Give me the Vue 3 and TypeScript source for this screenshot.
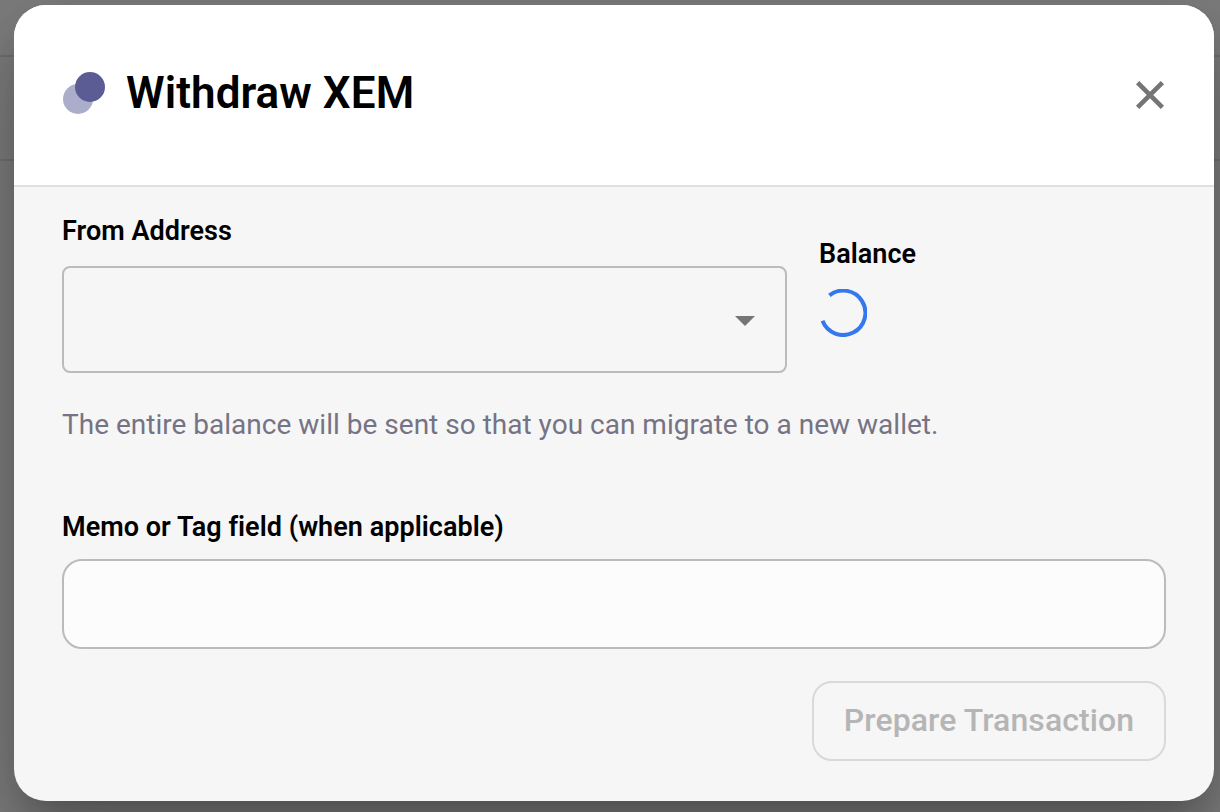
<script setup lang="ts">
import { ref } from 'vue'

const currency = ref<string>('XEM')
const memo = ref<string>('')
</script>

<template>
  <div class="page">
    <div class="page-row first"></div>
    <div class="page-row second"></div>
    <div class="overlay">
      <section class="dialog" role="dialog" aria-labelledby="dialog-title">
        <header class="header">
          <svg class="logo" width="42" height="42" viewBox="0 0 42 42" aria-hidden="true">
            <circle cx="15" cy="27" r="15" fill="#acadca" />
            <circle cx="27" cy="15" r="15" fill="#5a5c93" />
          </svg>
          <h1 id="dialog-title" class="title">Withdraw {{ currency }}</h1>
          <button class="close" type="button" aria-label="Close">
            <svg width="30" height="30" viewBox="0 0 30 30">
              <path d="M2.6 2.6 27.4 27.4M27.4 2.6 2.6 27.4" fill="none" stroke="#757575" stroke-width="4.6" />
            </svg>
          </button>
        </header>
        <div class="body">
          <div class="source">
            <div class="address">
              <div class="label from-label">From Address</div>
              <div class="select" role="combobox" aria-label="From Address">
                <svg width="20" height="10" viewBox="0 0 20 10"><path d="M0 0h20L10 10z" fill="#757575" /></svg>
              </div>
            </div>
            <div class="balance">
              <div class="label balance-label">Balance</div>
              <svg class="spinner" width="48" height="48" viewBox="0 0 48 48">
                <path d="M10.4 6.4A22.2 22.2 0 1 1 3.5 31.8" fill="none" stroke="#3478f0" stroke-width="4" />
              </svg>
            </div>
          </div>
          <p class="helper">The entire balance will be sent so that you can migrate to a new wallet.</p>
          <label class="label memo-label" for="memo">Memo or Tag field (when applicable)</label>
          <input id="memo" v-model="memo" class="memo" type="text" />
          <div class="actions">
            <button class="prepare" type="button" disabled>Prepare Transaction</button>
          </div>
        </div>
      </section>
    </div>
  </div>
</template>

<style>
body {
  margin: 0;
  overflow: hidden;
}
</style>

<style scoped>
* {
  box-sizing: border-box;
}

.page {
  position: relative;
  width: 1220px;
  height: 812px;
  overflow: hidden;
  background: #fafafa;
  font-family: Roboto, sans-serif;
}

.page-row {
  border-bottom: 2px solid #e0e0e0;
}

.page-row.first {
  height: 57px;
}

.page-row.second {
  height: 104px;
}

.overlay {
  position: absolute;
  inset: 0;
  padding: 5px 6px 11px 14px;
  background: rgba(0, 0, 0, 0.5);
}

.dialog {
  height: 796px;
  border-radius: 32px;
  background: #f6f6f6;
  box-shadow:
    0 22px 30px -14px rgba(0, 0, 0, 0.2),
    0 48px 76px 6px rgba(0, 0, 0, 0.14),
    0 18px 92px 16px rgba(0, 0, 0, 0.12);
}

.header {
  display: flex;
  align-items: center;
  height: 182px;
  padding: 0 49px;
  border-bottom: 2px solid #e0e0e0;
  border-radius: 32px 32px 0 0;
  background: #fff;
}

.logo {
  flex: none;
  margin-top: -4px;
}

.title {
  flex: 1;
  margin: -4px 0 0 21px;
  font-size: 44px;
  line-height: 60px;
  font-weight: 600;
  letter-spacing: 0.06px;
  color: #000;
  white-space: nowrap;
}

.close {
  display: flex;
  padding: 0;
  border: 0;
  background: none;
}

.body {
  padding: 0 48px;
}

.source {
  display: flex;
  gap: 32px;
}

.address {
  width: 725px;
}

.label {
  display: block;
  font-size: 27px;
  line-height: 32px;
  font-weight: 600;
  letter-spacing: 0.04px;
  color: #000;
  white-space: nowrap;
}

.from-label {
  margin-top: 28px;
}

.balance-label {
  margin-top: 51px;
}

.select {
  display: flex;
  align-items: center;
  justify-content: flex-end;
  height: 107px;
  margin-top: 19px;
  padding: 2px 30px 0 0;
  border: 2px solid #bbb;
  border-radius: 8px;
}

.spinner {
  display: block;
  margin-top: 19px;
}

.helper {
  margin: 35px 0 0;
  font-size: 28px;
  line-height: 34px;
  letter-spacing: 0.01px;
  color: #757384;
  white-space: nowrap;
}

.memo-label {
  margin-top: 69px;
}

.memo {
  display: block;
  width: 100%;
  height: 90px;
  margin-top: 16px;
  padding: 0 24px;
  border: 2px solid #bbb;
  border-radius: 20px;
  background: #fcfcfc;
  font: 28px Roboto, sans-serif;
}

.actions {
  display: flex;
  justify-content: flex-end;
  margin-top: 32px;
}

.prepare {
  width: 354px;
  height: 80px;
  padding: 0 0 2px;
  border: 2px solid #d9d9d9;
  border-radius: 20px;
  background: transparent;
  font: 500 32px Roboto, sans-serif;
  letter-spacing: 0.1px;
  color: #b5b5b5;
  white-space: nowrap;
}
</style>
